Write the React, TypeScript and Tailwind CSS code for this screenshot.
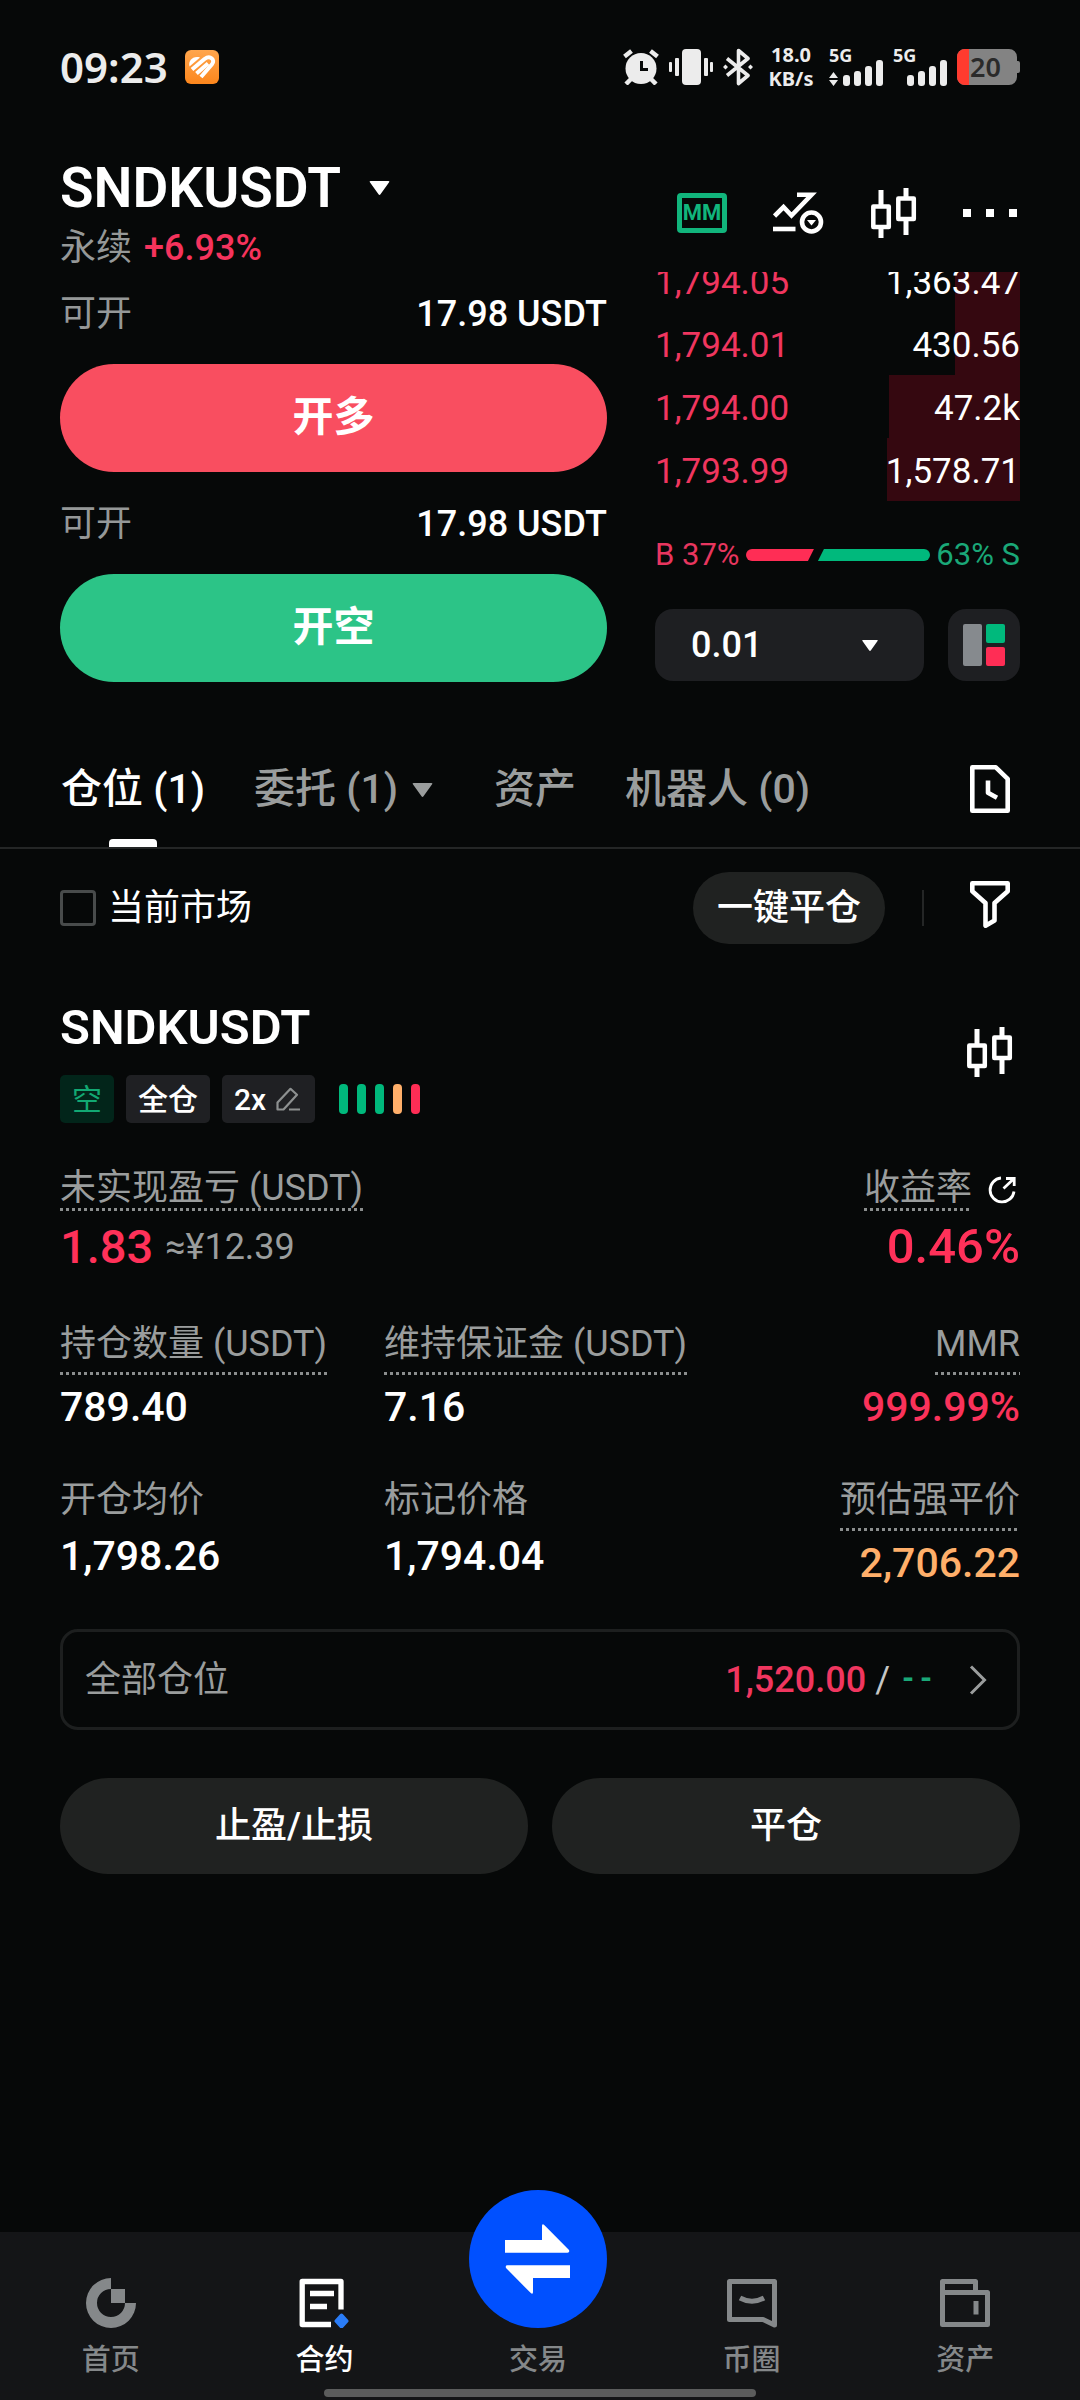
import type { ReactNode } from 'react';

interface BookRow {
  price: string;
  amount: string;
  depth: number;
}

const asks: BookRow[] = [
  { price: '1,794.05', amount: '1,363.47', depth: 18 },
  { price: '1,794.01', amount: '430.56', depth: 18 },
  { price: '1,794.00', amount: '47.2k', depth: 36 },
  { price: '1,793.99', amount: '1,578.71', depth: 36.5 },
];

const riskBars = ['bg-[#00b97c]', 'bg-[#00b97c]', 'bg-[#00b97c]', 'bg-[#ffaf6a]', 'bg-[#ff2d55]'];

function Triangle({ className }: { className: string }) {
  return (
    <svg viewBox="0 0 20 14" className={className} fill="currentColor" aria-hidden="true">
      <path d="M1 0h18q1.500 0 .6 1.200L11 13.300q-1 1.200-2 0L.4 1.200Q-.5 0 1 0z" />
    </svg>
  );
}

function CandlesIcon() {
  return (
    <svg viewBox="0 0 46 50" className="h-[50px] w-[46px]" fill="none" stroke="currentColor" strokeWidth="4.500" strokeLinejoin="round">
      <path d="M10 2v15M10 41v9M35 0v10M35 33v14" strokeWidth="5" />
      <rect x="2.300" y="18.500" width="15.500" height="20.500" />
      <rect x="27.300" y="10.500" width="15.500" height="20.500" />
    </svg>
  );
}

function Signal({ data }: { data?: boolean }) {
  return (
    <svg viewBox="0 0 54 50" className="h-[50px] w-[54px]" fill="currentColor">
      <text x="0" y="20" fontSize="18" fontWeight="700">5G</text>
      {data && <path d="M4.500 30l4.500 6H0zM4.500 44L0 38h9z" />}
      <rect x="14" y="33" width="7" height="11" rx="3" />
      <rect x="25" y="29" width="7" height="15" rx="3" />
      <rect x="36" y="24" width="7" height="20" rx="3" />
      <rect x="47" y="18" width="7" height="26" rx="3" />
    </svg>
  );
}

function StatusBar() {
  return (
    <div className="flex h-[134px] items-center justify-between px-[60px] font-['Noto_Sans',sans-serif] text-[#ececec]">
      <div className="flex items-center gap-[17px]">
        <span className="text-[42px] leading-[48px] font-semibold">09:23</span>
        <svg viewBox="0 0 34 34" className="h-[34px] w-[34px]">
          <defs>
            <linearGradient id="health" x1="0" y1="0" x2="0" y2="1">
              <stop offset="0" stopColor="#ffa64d" />
              <stop offset="1" stopColor="#fc861c" />
            </linearGradient>
          </defs>
          <rect width="34" height="34" rx="6" fill="url(#health)" />
          <path d="M4.500 16.500C3 10.500 8 5.500 15 7.500z" fill="#fff" />
          <g fill="none" stroke="#fff" strokeWidth="4">
            <path d="M7 19.500L19.500 9c6-4.500 11 1.200 7.500 5.200L16 27" />
            <path d="M11.500 23.500L23 13.500" />
          </g>
        </svg>
      </div>
      <div className="flex items-center gap-[10px]">
        <svg viewBox="0 0 36 36" className="h-[36px] w-[36px]" fill="currentColor">
          <circle cx="18" cy="19.500" r="15.500" />
          <g stroke="currentColor" strokeWidth="4.500">
            <path d="M1.500 7.500L8.500 2M34.500 7.500L27.500 2M3 35l5-5M33 35l-5-5" />
          </g>
          <path d="M18.500 12v8.500H25" fill="none" stroke="#060808" strokeWidth="3" />
        </svg>
        <svg viewBox="0 0 44 36" className="h-[36px] w-[44px]" fill="currentColor">
          <rect x="13" width="19" height="36" rx="4" />
          <rect y="13" width="3" height="10" rx="1" />
          <rect x="6" y="9" width="4" height="18" rx="1" />
          <rect x="35" y="9" width="4" height="18" rx="1" />
          <rect x="41" y="13" width="3" height="10" rx="1" />
        </svg>
        <svg viewBox="0 0 30 38" className="h-[38px] w-[30px]" fill="none" stroke="currentColor" strokeWidth="3.600" strokeLinejoin="round">
          <path d="M4 10.500l21 17-9.500 8V2.500l9.500 8-21 17" />
          <path d="M2.500 16.500l2.500 2.500-2.500 2.500L0 19zM27.500 16.500L30 19l-2.500 2.500L25 19z" fill="currentColor" stroke="none" />
        </svg>
        <div className="ml-[4px] flex w-[48px] flex-col text-center text-[20px] leading-[24px] font-bold">
          <span>18.0</span>
          <span>KB/s</span>
        </div>
        <div className="ml-[4px]">
          <Signal data />
        </div>
        <Signal />
        <svg viewBox="0 0 63 36" className="h-[36px] w-[63px]">
          <path d="M8 0h44a8 8 0 0 1 8 8v4h1a2 2 0 0 1 2 2v8a2 2 0 0 1-2 2h-1v4a8 8 0 0 1-8 8H8a8 8 0 0 1-8-8V8a8 8 0 0 1 8-8z" fill="#838383" />
          <path d="M8 0h4v36H8a8 8 0 0 1-8-8V8a8 8 0 0 1 8-8z" fill="#ff3b2f" />
          <text x="13" y="28" fontSize="27" fontWeight="600" fill="#2a2a2a">20</text>
        </svg>
      </div>
    </div>
  );
}

function Header() {
  return (
    <header className="flex items-center justify-between px-[60px] pt-[24px] pb-[4px]">
      <div className="flex flex-col gap-[10px]">
        <button className="flex items-center gap-[28px] text-[55px] leading-[60px] font-semibold">
          SNDKUSDT
          <Triangle className="h-[14px] w-[21px]" />
        </button>
        <div className="flex gap-[12px] text-[36px] leading-[40px]">
          <span className="text-[#959898]">永续</span>
          <span className="font-medium text-[#f5335c]">+6.93%</span>
        </div>
      </div>
      <div className="flex items-center gap-[46px]">
        <button className="flex h-[40px] w-[50px] items-center justify-center rounded-[4px] border-[5px] border-[#11b57c] text-[22px] leading-[30px] font-bold text-[#11b57c]">
          MM
        </button>
        <button aria-label="条件单">
          <svg viewBox="0 0 52 42" className="h-[42px] w-[52px]" fill="none" stroke="currentColor" strokeWidth="4.600">
            <path d="M1.500 24l9-9 8 8.500L38.500 2.800H24" />
            <path d="M0 37h22.500" />
            <circle cx="38.500" cy="30" r="9.500" />
            <path d="M34 28h9l-4.500 5.500z" fill="currentColor" stroke="none" />
          </svg>
        </button>
        <button aria-label="K线">
          <CandlesIcon />
        </button>
        <button aria-label="更多">
          <svg viewBox="0 0 57 8" className="h-[8px] w-[57px]" fill="currentColor">
            <path d="M0 0h8v8H0zM23 0h8v8h-8zM46 0h8v8h-8z" />
          </svg>
        </button>
      </div>
    </header>
  );
}

function OpenOrder({ label, color }: { label: string; color: string }) {
  return (
    <>
      <div className="flex h-[82px] items-center justify-between pt-[2px] text-[36px]">
        <span className="text-[#959898]">可开</span>
        <span className="font-medium">17.98 USDT</span>
      </div>
      <button className={`h-[108px] w-full rounded-full text-[41px] font-bold ${color}`}>{label}</button>
    </>
  );
}

function OrderBook() {
  return (
    <div className="flex flex-[365] flex-col">
      <div className="flex h-[229px] flex-col justify-end overflow-hidden">
        <table className="w-full shrink-0 text-[35px]">
          <tbody>
            {asks.map((row) => (
              <tr
                key={row.price}
                className="h-[63px]"
                style={{ background: `linear-gradient(to left, #350810 ${row.depth}%, transparent ${row.depth}%)` }}
              >
                <td className="p-0 pt-[5px] text-[#f0365f]">{row.price}</td>
                <td className="p-0 pt-[5px] text-right">{row.amount}</td>
              </tr>
            ))}
          </tbody>
        </table>
      </div>
      <div className="mt-[34px] flex h-[40px] items-center gap-[6px] text-[31px]">
        <span className="text-[#e8365f]">B 37%</span>
        <div className="flex h-[12px] flex-1">
          <span className="w-[37%] rounded-l-full bg-[#ff2d55] [clip-path:polygon(0_0,100%_0,calc(100%-6px)_100%,0_100%)]" />
          <span className="flex-1 rounded-r-full bg-[#00b97c] [clip-path:polygon(10px_0,100%_0,100%_100%,4px_100%)]" />
        </div>
        <span className="text-[#1aa878]">63% S</span>
      </div>
      <div className="mt-[34px] flex gap-[24px]">
        <div className="relative flex-1">
          <select
            aria-label="价格精度"
            className="h-[72px] w-full appearance-none rounded-[18px] bg-[#1e1f22] pl-[36px] text-[36px] font-medium text-white"
          >
            <option>0.01</option>
          </select>
          <Triangle className="pointer-events-none absolute top-[31px] right-[46px] h-[11px] w-[16px]" />
        </div>
        <button aria-label="盘口布局" className="flex h-[72px] w-[72px] items-center justify-center rounded-[18px] bg-[#1e1f22]">
          <svg viewBox="0 0 42 42" className="h-[42px] w-[42px]">
            <rect width="19" height="42" rx="2" fill="#868a8e" />
            <rect x="23" width="19" height="19" rx="2" fill="#00b97c" />
            <rect x="23" y="23" width="19" height="19" rx="2" fill="#ff2d55" />
          </svg>
        </button>
      </div>
    </div>
  );
}

function Tabs() {
  return (
    <div className="mt-[48px] flex items-center justify-between border-b-2 border-[#242626] pr-[70px] pl-[61px]">
      <div className="flex gap-[49px] text-[41px] font-medium text-[#9a9d9d]">
        <button className="relative h-[117px] pt-[3px] text-white">
          仓位 (1)
          <span className="absolute bottom-0 left-1/2 h-[8px] w-[48px] -translate-x-1/2 rounded-t-[4px] bg-white" />
        </button>
        <button className="mr-[12px] flex h-[117px] items-center gap-[14px] pt-[3px]">
          委托 (1)
          <Triangle className="h-[14px] w-[21px]" />
        </button>
        <button className="h-[117px] pt-[3px]">资产</button>
        <button className="h-[117px] pt-[3px]">机器人 (0)</button>
      </div>
      <button aria-label="历史记录">
        <svg viewBox="0 0 40 48" className="h-[48px] w-[40px]" fill="none" stroke="currentColor" strokeWidth="4.600" strokeLinejoin="round">
          <path d="M2.300 2.300h23.500l11.900 11.500v31.900H2.300z" />
          <path d="M18 15.500v12.300l9 5" />
        </svg>
      </button>
    </div>
  );
}

function FilterRow() {
  return (
    <div className="mt-[23px] flex items-center justify-between pr-[70px] pl-[60px]">
      <label className="flex items-center gap-[12px] text-[36px]">
        <input type="checkbox" className="h-[36px] w-[36px] appearance-none rounded-[4px] border-[3px] border-[#484b4b]" />
        当前市场
      </label>
      <div className="flex items-center">
        <button className="h-[72px] rounded-full bg-[#202221] px-[24px] text-[36px] font-medium">一键平仓</button>
        <span className="mr-[46px] ml-[37px] h-[36px] w-[2px] bg-[#242626]" />
        <button aria-label="筛选" className="pb-[8px]">
          <svg viewBox="0 0 40 47" className="h-[47px] w-[40px]" fill="none" stroke="currentColor" strokeWidth="4.600" strokeLinejoin="round">
            <path d="M2.300 2.300h35.400v8L24.500 22v17.500L15.500 44.700V22L2.300 10.300z" />
          </svg>
        </button>
      </div>
    </div>
  );
}

const dotted =
  'bg-[repeating-linear-gradient(90deg,#8b8e8e_0_3px,transparent_3px_6px)] bg-[length:100%_3px] bg-bottom bg-no-repeat';

interface MetricProps {
  label: string;
  value: string;
  underline?: boolean;
  className?: string;
}

function Metric({ label, value, underline, className = 'items-start' }: MetricProps) {
  return (
    <div className={`flex flex-col whitespace-nowrap ${className}`}>
      <span className={`text-[36px] leading-[40px] text-[#9a9d9d] ${underline ? `${dotted} mb-[8px] pb-[11px]` : 'mb-[12px]'}`}>
        {label}
      </span>
      <span className="text-[41px] leading-[48px] font-medium">{value}</span>
    </div>
  );
}

function Position() {
  return (
    <section className="mt-[54px] px-[60px]">
      <div className="flex items-start justify-between">
        <div>
          <h2 className="text-[49px] leading-[60px] font-semibold">SNDKUSDT</h2>
          <div className="mt-[17px] flex items-center gap-[12px] text-[30px]">
            <span className="flex h-[48px] items-center rounded-[5px] bg-[#02251a] px-[12px] text-[#12a873]">空</span>
            <span className="flex h-[48px] items-center rounded-[5px] bg-[#1f2023] px-[12px] font-medium">全仓</span>
            <button className="flex h-[48px] items-center gap-[10px] rounded-[5px] bg-[#1f2023] pr-[15px] pl-[12px] font-medium">
              2x
              <svg viewBox="0 0 24 24" className="h-[24px] w-[24px]" fill="none" stroke="#8d9090" strokeWidth="2.200" strokeLinejoin="round">
                <path d="M1.500 22.500v-7L14.500 1.800l6.500 6L7.500 22.500zM13 22.500h11" />
              </svg>
            </button>
            <div className="ml-[12px] flex gap-[9px]">
              {riskBars.map((color, i) => (
                <span key={i} className={`h-[30px] w-[9px] rounded-[4px] ${color}`} />
              ))}
            </div>
          </div>
        </div>
        <button aria-label="K线" className="mt-[29px] mr-[7px]">
          <CandlesIcon />
        </button>
      </div>

      <div className="mt-[45px] flex justify-between text-[36px]">
        <div className="flex flex-col items-start">
          <span className={`pb-[3px] leading-[40px] text-[#9a9d9d] ${dotted}`}>未实现盈亏 (USDT)</span>
          <div className="mt-[12px] flex items-center gap-[12px] leading-[48px]">
            <span className="text-[47px] font-medium text-[#ff3159]">1.83</span>
            <span className="text-[36px] text-[#9a9d9d]">≈¥12.39</span>
          </div>
        </div>
        <div className="flex flex-col items-end">
          <div className="flex items-center gap-[16px]">
            <span className={`pb-[3px] leading-[40px] text-[#9a9d9d] ${dotted}`}>收益率</span>
            <button aria-label="分享" className="pr-[4px]">
              <svg viewBox="0 0 28 28" className="h-[28px] w-[28px]" fill="none" stroke="currentColor" strokeWidth="2.800">
                <path d="M13 2A12 12 0 1 0 26 15.500" />
                <path d="M15.500 12.500L25.500 3M18 2.500h8.200V10" />
              </svg>
            </button>
          </div>
          <span className="mt-[12px] text-[49px] leading-[48px] font-medium text-[#ff3159]">0.46%</span>
        </div>
      </div>

      <div className="mt-[53px] grid grid-cols-3 gap-x-[12px] gap-y-[49px]">
        <Metric label="持仓数量 (USDT)" value="789.40" underline />
        <Metric label="维持保证金 (USDT)" value="7.16" underline />
        <Metric label="MMR" value="999.99%" underline className="items-end text-[#fa325a]" />
        <Metric label="开仓均价" value="1,798.26" />
        <Metric label="标记价格" value="1,794.04" />
        <Metric label="预估强平价" value="2,706.22" underline className="items-end text-[#ffaf6a]" />
      </div>

      <button className="mt-[42px] flex h-[101px] w-full items-center rounded-[18px] border-[3px] border-[#1d1f1f] pr-[29px] pl-[22px] text-[36px]">
        <span className="flex-1 text-left text-[#9a9d9d]">全部仓位</span>
        <span className="font-medium text-[#f0365f]">1,520.00</span>
        <span className="mx-[9px] text-[#c4c6c6]">/</span>
        <span className="font-['Liberation_Mono',monospace] text-[30px] font-bold text-[#1aa878]">--</span>
        <svg viewBox="0 0 20 30" className="ml-[33px] h-[30px] w-[20px]" fill="none" stroke="#9a9d9d" strokeWidth="3">
          <path d="M3 1.500L16.500 15 3 28.500" />
        </svg>
      </button>

      <div className="mt-[48px] grid grid-cols-2 gap-[24px] text-[36px] font-medium">
        <button className="h-[96px] rounded-full bg-[#202221]">止盈/止损</button>
        <button className="h-[96px] rounded-full bg-[#202221]">平仓</button>
      </div>
    </section>
  );
}

function NavItem({ label, active, children }: { label: string; active?: boolean; children: ReactNode }) {
  return (
    <a href="#" className={`flex flex-col items-center gap-[14px] ${active ? 'text-white' : 'text-[#85888a]'}`}>
      {children}
      <span className="text-[29px] leading-[36px] font-medium">{label}</span>
    </a>
  );
}

function BottomNav() {
  return (
    <nav className="mt-auto bg-[#141517] pt-[46px] pb-[3px]">
      <div className="grid grid-cols-5 items-end pr-2 pl-1">
        <NavItem label="首页">
          <svg viewBox="0 0 50 50" className="h-[50px] w-[50px]" fill="currentColor">
            <path d="M25 0a25 25 0 1 0 25 25H39A14 14 0 1 1 25 11z" />
            <path d="M25 11h14v14H25z" />
          </svg>
        </NavItem>
        <NavItem label="合约" active>
          <svg viewBox="0 0 50 50" className="h-[50px] w-[50px]" fill="none" stroke="currentColor" strokeWidth="5.300" strokeLinejoin="round">
            <path d="M42 31.500V3.500H3.200v43H32" />
            <path d="M11 15.500h24M11 28.500h17" />
            <path d="M42.500 37.500l5 5.500-5 5.500-5-5.500z" fill="#2a7cf7" stroke="#2a7cf7" strokeWidth="4" />
          </svg>
        </NavItem>
        <NavItem label="交易">
          <span className="mt-[-88px] flex h-[138px] w-[138px] items-center justify-center rounded-full bg-[#0050ff]">
            <svg viewBox="0 0 65 70" className="h-[70px] w-[65px]" fill="#fff">
              <path d="M0 16h37V2q0-3 2.500-.8L64 26q1 2.700-1.500 2.700H0z" />
              <path d="M65 54H28v14q0 3-2.500.8L1 44q-1-2.700 1.500-2.700H65z" />
            </svg>
          </span>
        </NavItem>
        <NavItem label="币圈">
          <svg viewBox="0 0 50 50" className="h-[50px] w-[50px]" fill="none" stroke="currentColor" strokeWidth="5" strokeLinejoin="round">
            <path d="M2.500 3.500h45v43.500L36 41.500H2.500z" />
            <path d="M13 20q12 6.500 24 0" />
          </svg>
        </NavItem>
        <NavItem label="资产">
          <svg viewBox="0 0 50 50" className="h-[50px] w-[50px]" fill="none" stroke="currentColor" strokeWidth="5" strokeLinejoin="round">
            <path d="M35.500 14V3.500h-33v43h45v-32h-45" />
            <path d="M36 23v13.500" />
          </svg>
        </NavItem>
      </div>
      <div className="mx-auto mt-[11px] h-[8px] w-2/5 rounded-full bg-[#5b5c5c]" />
    </nav>
  );
}

export default function App() {
  return (
    <div className="flex min-h-screen flex-col bg-[#060808] font-['Roboto','Noto_Sans_CJK_SC',sans-serif] text-white">
      <StatusBar />
      <Header />
      <main>
        <div className="flex gap-[48px] px-[60px]">
          <div className="flex flex-[547] flex-col gap-[10px]">
            <OpenOrder label="开多" color="bg-[#f94e60]" />
            <OpenOrder label="开空" color="bg-[#2cc487]" />
          </div>
          <OrderBook />
        </div>
        <Tabs />
        <FilterRow />
        <Position />
      </main>
      <BottomNav />
    </div>
  );
}
